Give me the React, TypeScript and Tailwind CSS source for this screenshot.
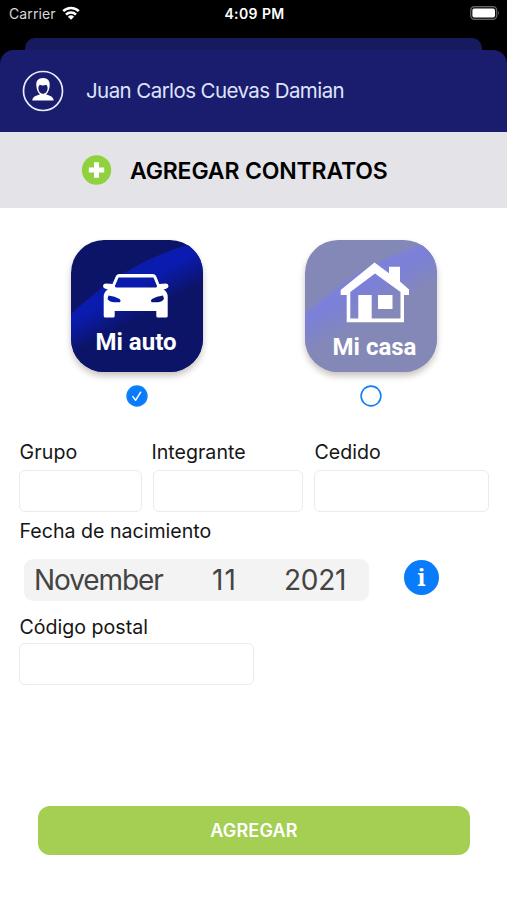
import type { ReactNode } from "react";

const ui = "font-['Inter','Liberation_Sans',sans-serif]";

function StatusBar() {
  return (
    <div className="flex h-[28px] items-center justify-between pl-[9px] pr-[7px] text-white">
      <div className="flex w-[120px] items-center gap-[6px]">
        <span className="text-[14px] leading-[20px] tracking-[0.1px] text-[#d8d8d8]">Carrier</span>
        <svg className="-mt-[2px]" width="18" height="14" viewBox="0 0 18 14" fill="none" stroke="white" strokeWidth="2.6">
          <path d="M1.2 5.2a11 11 0 0 1 15.6 0" />
          <path d="M4 8.6a7 7 0 0 1 10 0" />
          <path d="M9 13.8 5.9 10.7a4.5 4.5 0 0 1 6.2 0z" fill="white" stroke="none" />
        </svg>
      </div>
      <span className="text-[14px] font-semibold leading-[20px] tracking-[0.4px]">4:09 PM</span>
      <div className="-mt-[2px] flex w-[120px] justify-end">
        <svg width="30" height="14" viewBox="0 0 30 14">
          <rect x="0.7" y="0.7" width="26" height="12.6" rx="3.6" fill="#111" stroke="#666" strokeWidth="1.2" />
          <rect x="2.4" y="2.4" width="22.6" height="9.2" rx="2" fill="white" />
          <path d="M28.2 4.8q1.6 2.2 0 4.4z" fill="#777" />
        </svg>
      </div>
    </div>
  );
}

function Header() {
  return (
    <div className="bg-black">
      <div className="mx-[25px] mt-[10px] h-[12px] rounded-t-[10px] bg-[#171a5e]" />
      <div className="-mt-[2px] flex h-[84px] items-center rounded-t-[14px] bg-[#1a1d6d] pl-[22px] pt-[2px] [clip-path:inset(2px_0_0_0_round_14px_14px_0_0)]">
        <svg width="42" height="42" viewBox="0 0 42 42">
          <circle cx="21" cy="21" r="19.5" fill="none" stroke="#e9ebfb" strokeWidth="1.7" />
          <path
            fillRule="evenodd"
            fill="white"
            d="M21 8c4.8 0 7 3 6.7 7.3-.1 3.900-1.400 7.300-3.700 9.200 3.300 1 7.400 1.700 7.700 6H10.300c.3-4.300 4.400-5 7.700-6-2.300-1.900-3.600-5.300-3.700-9.200C14 11 16.200 8 21 8zM16.400 18c0 3.300 2 5.800 4.600 5.800s4.600-2.500 4.600-5.800c0-1.300-.5-2.300-1.300-3.200-2.200.8-4.700.8-6.400 0-1 .8-1.500 1.900-1.500 3.200z"
          />
        </svg>
        <span className="ml-[22px] text-[20.5px] leading-[26px] tracking-[-0.58px] text-[#dfe4fb]">
          Juan Carlos Cuevas Damian
        </span>
      </div>
    </div>
  );
}

function TitleBar() {
  return (
    <div className="flex h-[76px] items-center bg-[#e4e3e8] pl-[82px]">
      <svg className="-mt-[1px]" width="30" height="30" viewBox="0 0 30 30">
        <circle cx="14.5" cy="15" r="14.7" fill="#8fd13f" />
        <path d="M14.5 7.3v15.4M6.8 15h15.4" stroke="white" strokeWidth="5" />
      </svg>
      <h1 className="ml-[18px] mt-[2px] text-[23px] font-semibold leading-[30px] tracking-[-0.15px] text-black">
        AGREGAR CONTRATOS
      </h1>
    </div>
  );
}

function Tile({ id, label, top, faded, children }: { id: string; label: string; top: string; faded?: boolean; children: ReactNode }) {
  return (
    <div className="relative h-[132px] w-[132px] rounded-[33px] shadow-[0_4px_6px_rgba(60,40,30,0.28)]">
      <svg className="absolute inset-0" width="132" height="132" viewBox="0 0 132 132">
        <defs>
          <linearGradient id={id} gradientUnits="userSpaceOnUse" x1="54" y1="29" x2="78" y2="72">
            <stop offset="0" stopColor={faded ? "#7f83d6" : "#0b1bac"} />
            <stop offset="0.4" stopColor={faded ? "#7b80d8" : "#0a1bb0"} />
            <stop offset="1" stopColor={faded ? "#8488b7" : "#0c1468"} />
          </linearGradient>
          <clipPath id={id + "-clip"}>
            <rect width="132" height="132" rx="33" />
          </clipPath>
        </defs>
        <g clipPath={"url(#" + id + "-clip)"}>
          <rect width="132" height="132" fill={faded ? "#8488b7" : "#0c1468"} />
          <path d="M0 74Q54 23 119 4L132 4V132H0z" fill={"url(#" + id + ")"} />
        </g>
        {children}
      </svg>
      <div className={"relative text-center font-['Roboto','Liberation_Sans',sans-serif] text-[24px] font-bold leading-[28px] text-white " + top}>
        {label}
      </div>
    </div>
  );
}

function Car() {
  return (
    <path
      fill="white"
      fillRule="evenodd"
      d="M44.5 37Q45.5 34 48.5 34H81.5Q84.5 34 85.5 37L88.3 44 95 43.5Q97.5 43.7 97.5 46.3 97 48.8 92.5 49.6 96.7 52 96.7 57V76Q96.7 77.5 95 77.5H87Q85.3 77.5 85.3 76V71H43.7V76Q43.7 77.5 42 77.5H34.4Q32.7 77.5 32.7 76V57Q32.7 52 37 49.6 32.5 48.8 32 46.3 32 43.7 34.5 43.5L41.5 44zM47.5 37.5 43.9 46Q43.9 47.5 45.5 47.5H84.5Q86.2 47.5 86 46L82.5 37.5zM37.5 55.5 36.5 59Q39 62.3 43 62.3H49Q50.5 60.5 48.5 59 44 56 37.5 55.5zM92 55.5 93 59Q90.5 62.3 86.5 62.3H80.5Q79 60.5 81 59 85.5 56 92 55.5z"
    />
  );
}

function House() {
  return (
    <g fill="white">
      <path
        fillRule="evenodd"
        d="M69.500 22.500 84 33.200V26.700H95V41.500L104 49.500V55H99V82.300H41.700V55H35.700V50zM70 33.500 45.300 52V78.500H95.500V52z"
      />
      <path d="M53.300 55H66.700V80H53.300zM73 55H87.500V69H73z" />
    </g>
  );
}

function Radio({ checked }: { checked?: boolean }) {
  return (
    <svg className="mt-[13px]" width="22" height="22" viewBox="0 0 22 22" fill="none">
      <circle cx="11" cy="11" r="9.9" fill={checked ? "#0a7cfb" : "white"} stroke="#0f80f5" strokeWidth="1.6" />
      {checked && <path d="m6.8 11.6 2.9 3.6 5-8" stroke="white" strokeWidth="1.5" strokeLinecap="round" strokeLinejoin="round" />}
    </svg>
  );
}

function Field({ label, width, shift, gap }: { label: string; width: string; shift: string; gap: string }) {
  return (
    <label className={"block " + width}>
      <span className={"block h-[24px] text-[19.6px] leading-[24px] text-[#161616] " + shift}>{label}</span>
      <input className={"block h-[42px] w-full rounded-[6px] border border-[#ebebeb] bg-white " + gap} />
    </label>
  );
}

export default function App() {
  return (
    <div className={"flex h-[900px] w-[507px] flex-col overflow-hidden bg-white " + ui}>
      <div className="bg-black">
        <StatusBar />
        <Header />
      </div>
      <TitleBar />
      <div className="mt-[32px] flex justify-between pl-[71px] pr-[70px]">
        <div className="flex flex-col items-center">
          <Tile id="auto" label="Mi auto" top="pt-[88px] pr-[2px]">
            <Car />
          </Tile>
          <Radio checked />
        </div>
        <div className="flex flex-col items-center">
          <Tile id="casa" label="Mi casa" top="pt-[93px] pl-[7px]" faded>
            <House />
          </Tile>
          <Radio />
        </div>
      </div>
      <div className="mt-[33px] flex pl-[19px]">
        <Field label="Grupo" width="w-[123px] mr-[11px]" shift="pl-[0.5px] tracking-[0.1px]" gap="mt-[6px]" />
        <Field label="Integrante" width="w-[150px] mr-[11px]" shift="-ml-[1.5px]" gap="mt-[6px]" />
        <Field label="Cedido" width="w-[175px]" shift="pl-[0.5px]" gap="mt-[6px]" />
      </div>
      <div className="mt-[7px] pl-[19.5px] text-[19.6px] leading-[24px] text-[#161616]">Fecha de nacimiento</div>
      <div className="mt-[16px] flex items-start pl-[24px]">
        <div className="flex h-[42px] w-[345px] items-center rounded-[9px] bg-[#f3f3f3] pl-[10px] text-[28px] leading-[34px] text-[#444]">
          <span className="w-[178px] tracking-[-1.1px]">November</span>
          <span className="w-[72px] tracking-[1px]">11</span>
          <span className="tracking-[-0.3px]">2021</span>
        </div>
        <div className="ml-[35px] mt-px flex h-[35px] w-[35px] items-center justify-center rounded-full bg-[#087cfb] font-['Noto_Serif','DejaVu_Serif','Liberation_Serif',serif] text-[23px] font-bold leading-[35px] text-white">
          i
        </div>
      </div>
      <div className="mt-[14px] pl-[19px]">
        <Field label="Código postal" width="w-[235px]" shift="pl-[0.5px]" gap="mt-[4px]" />
      </div>
      <button className="ml-[38px] mt-[121px] h-[49px] w-[432px] rounded-[12px] bg-[#a4cf53] text-[18px] font-semibold leading-[24px] tracking-[0.15px] text-white">
        AGREGAR
      </button>
    </div>
  );
}
